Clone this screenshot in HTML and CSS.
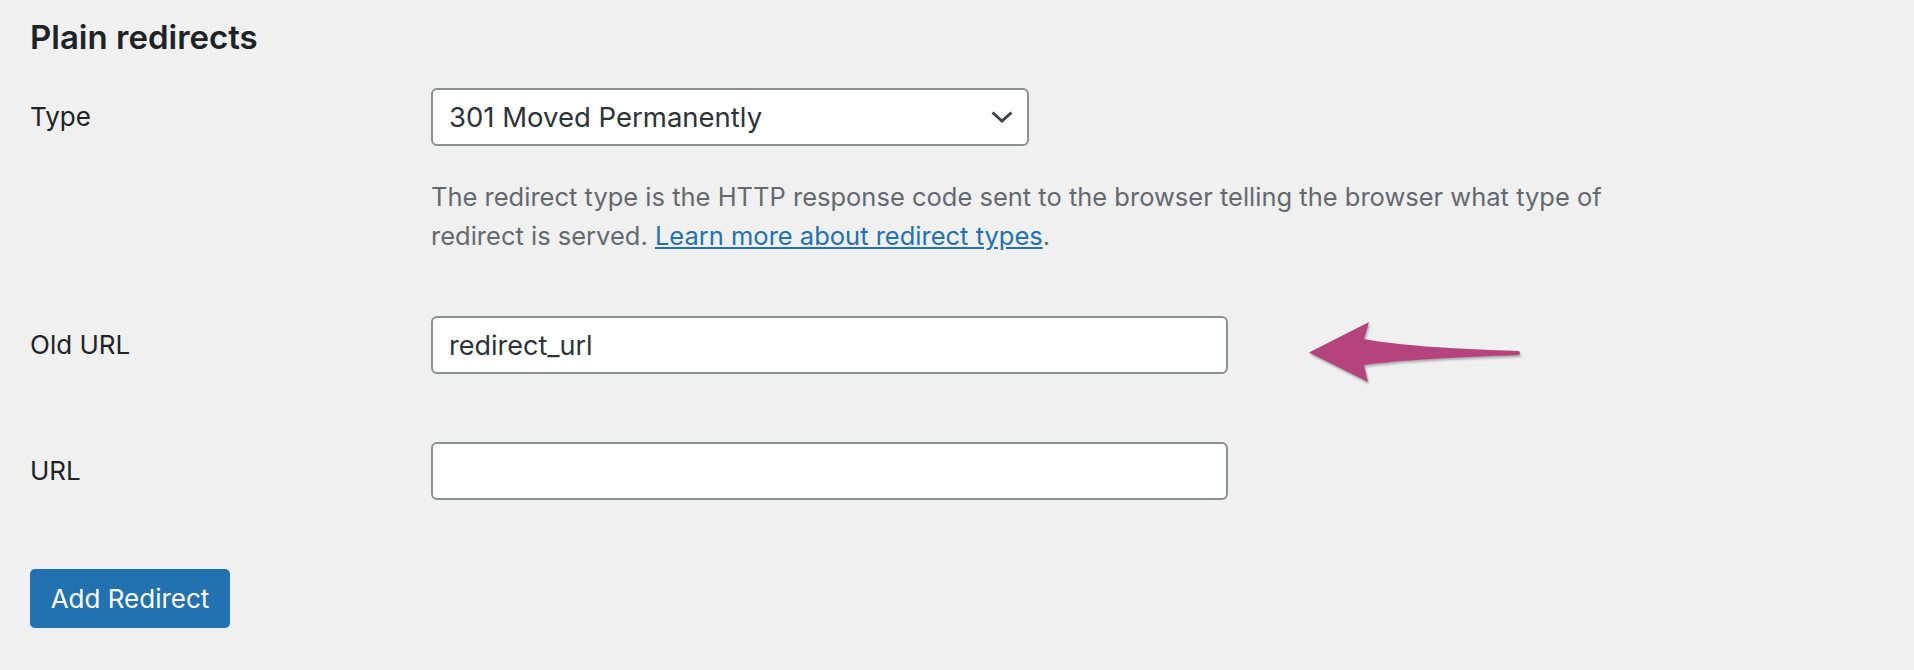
FILE: index.html
```html
<!DOCTYPE html>
<html lang="en">
<head>
    <meta charset="UTF-8">
    <meta name="viewport" content="width=device-width, initial-scale=1.0">
    <title>Plain redirects</title>
    <link rel="stylesheet" href="styles.css">
</head>

<body>

    <div class="wrap">
        <h2 class="section-title">Plain redirects</h2>

        <form class="redirect-form">
            <div class="field-row row-type">
                <label for="redirectType" class="field-label">Type</label>
                <div class="field-control">
                    <div class="select-wrap">
                        <select id="redirectType" class="field-select">
                            <option value="301">301 Moved Permanently</option>
                            <option value="302">302 Found</option>
                            <option value="307">307 Temporary Redirect</option>
                        </select>
                        <svg class="select-chevron" viewBox="0 0 22 12" aria-hidden="true">
                            <path d="M1.5 1.5 L11 10 L20.5 1.5" fill="none" stroke="#3c434a" stroke-width="3" />
                        </svg>
                    </div>
                    <p class="description">The redirect type is the HTTP response code sent to the browser telling the browser what type of redirect is served. <a href="#">Learn more about redirect types</a>.</p>
                </div>
            </div>

            <div class="field-row row-old">
                <label for="oldUrl" class="field-label">Old URL</label>
                <div class="field-control">
                    <input type="text" id="oldUrl" class="field-input" value="redirect_url">
                </div>
                <svg class="callout-arrow" viewBox="0 0 230 75" aria-hidden="true">
                    <path d="M9 37.5 L69 7 L64 24 C100 31 160 34 218 36 A2 2 0 0 1 218 40 C160 42 100 45 64 50 L68 67 Z" fill="#b5437e" />
                </svg>
            </div>

            <div class="field-row row-url">
                <label for="newUrl" class="field-label">URL</label>
                <div class="field-control">
                    <input type="text" id="newUrl" class="field-input">
                </div>
            </div>

            <button type="button" class="button-primary">Add Redirect</button>
        </form>
    </div>

</body>
</html>
```

FILE: styles.css
```css
body {
    margin: 0;
    background: #f0f0f1;
    color: #1d2327;
    font-family: Inter, "Noto Sans", sans-serif;
    font-size: 26px;
}

.wrap {
    padding: 17px 30px 0 30px;
}

.section-title {
    margin: 0;
    font-size: 33px;
    line-height: 40px;
    font-weight: 600;
}

.redirect-form {
    margin-top: 31px;
}

.field-row {
    display: flex;
    align-items: flex-start;
    position: relative;
}

.field-label {
    width: 401px;
    flex-shrink: 0;
    line-height: 58px;
}

.field-control {
    flex: 1;
}

.select-wrap {
    position: relative;
    width: 598px;
}

.field-select {
    display: block;
    width: 100%;
    height: 58px;
    padding: 0 50px 0 16px;
    border: 2px solid #8c8f94;
    border-radius: 6px;
    background: #fff;
    color: #2c3338;
    font-family: inherit;
    font-size: 27.5px;
    appearance: none;
    -webkit-appearance: none;
    box-sizing: border-box;
}

.select-chevron {
    position: absolute;
    right: 16px;
    top: 23px;
    width: 22px;
    height: 12px;
}

.description {
    margin: 31px 0 0 0;
    max-width: 1200px;
    color: #646970;
    font-size: 25.5px;
    line-height: 39px;
}

.description a {
    color: #2271b1;
}

.row-old {
    margin-top: 61px;
}

.row-url {
    margin-top: 68px;
}

.field-input {
    display: block;
    width: 797px;
    height: 58px;
    padding: 0 16px;
    border: 2px solid #8c8f94;
    border-radius: 6px;
    background: #fff;
    color: #2c3338;
    font-family: inherit;
    font-size: 27px;
    box-sizing: border-box;
}

.callout-arrow {
    position: absolute;
    left: 1270px;
    top: -1px;
    width: 230px;
    height: 75px;
    filter: drop-shadow(1px 2px 1px rgba(0, 0, 0, 0.3));
}

.button-primary {
    margin-top: 69px;
    width: 200px;
    height: 59px;
    background: #2271b1;
    border: none;
    border-radius: 5px;
    color: #fff;
    font-family: inherit;
    font-size: 26px;
    cursor: pointer;
}
```
